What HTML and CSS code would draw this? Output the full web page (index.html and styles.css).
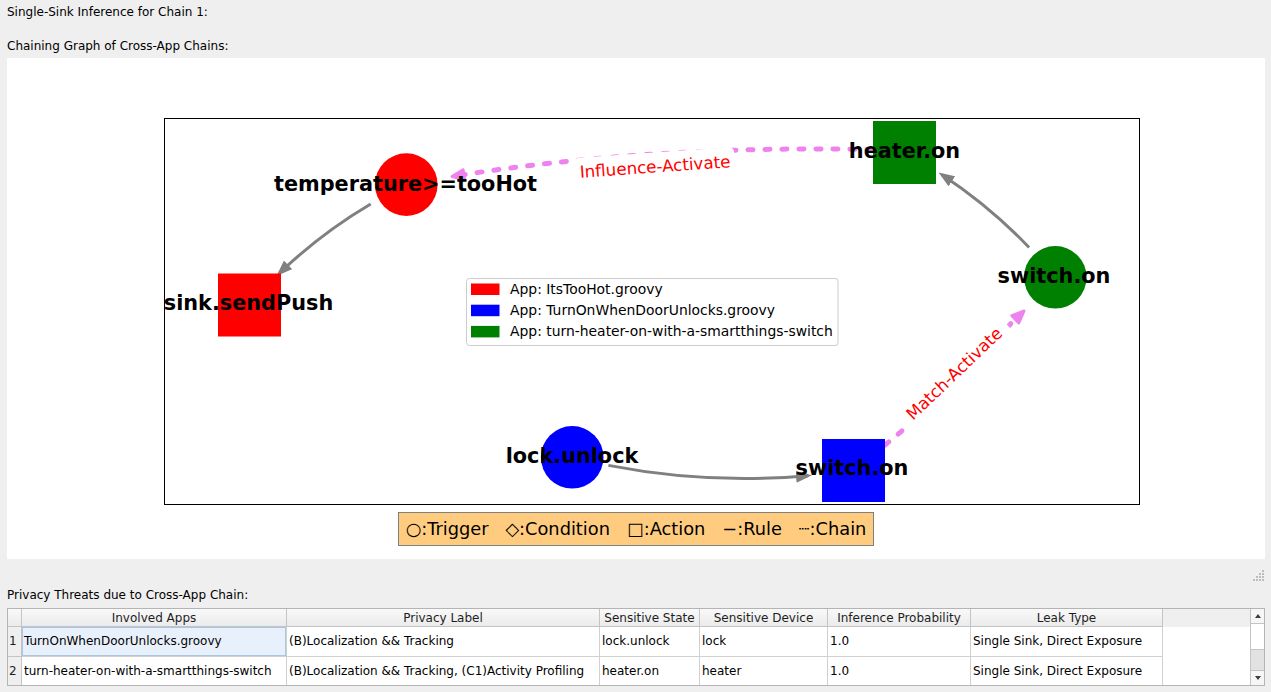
FILE: index.html
```html
<!DOCTYPE html>
<html>
<head>
<meta charset="utf-8">
<title>Single-Sink Inference</title>
<link rel="stylesheet" href="styles.css">
</head>
<body>
<div class="app">
  <div class="caption caption-top">Single-Sink Inference for Chain 1:</div>
  <div class="caption caption-graph">Chaining Graph of Cross-App Chains:</div>
  <div class="panel">
    <svg class="graph" width="1258" height="447" viewBox="7 58 1258 447">
      <defs>
        <marker id="head" markerUnits="userSpaceOnUse" markerWidth="16" markerHeight="12" viewBox="0 0 16 12" refX="12" refY="6" orient="auto">
          <path d="M0,0 L16,6 L0,12 Z" fill="#808080"/>
        </marker>
      </defs>
      <rect class="axes" x="164.5" y="118.5" width="975" height="386"/>
      <g class="rule">
        <path d="M370.7,204 Q321,233.3 279.4,273.2" marker-end="url(#head)"/>
        <path d="M1029.1,247.5 Q989.7,206.1 941.9,174.7" marker-end="url(#head)"/>
        <path d="M608.4,465.4 Q707.5,484.7 808,475.7" marker-end="url(#head)"/>
      </g>
      <g class="chain">
        <path d="M872,149.5 Q650,145 455,176"/>
        <path d="M885,445 Q955,388 1014,320"/>
      </g>
      <polygon class="chain-head" points="452,176.5 464.7,179.5 463.1,169.7"/>
      <polygon class="chain-head" points="1024,311 1018.8,322.9 1011.9,315.7"/>
      <circle cx="406.3" cy="184.6" r="31.3" fill="#ff0000"/>
      <rect x="873" y="121" width="63" height="63" fill="#008000"/>
      <circle cx="1055.3" cy="277.3" r="31.3" fill="#008000"/>
      <rect x="218" y="273.5" width="63" height="63" fill="#ff0000"/>
      <circle cx="572.2" cy="457.3" r="31.3" fill="#0000ff"/>
      <rect x="822" y="439" width="63" height="63" fill="#0000ff"/>
      <g class="node-label">
        <text x="405.5" y="191">temperature&gt;=tooHot</text>
        <text x="904.5" y="158.3">heater.on</text>
        <text x="1054" y="283.3">switch.on</text>
        <text x="248.5" y="310.3">sink.sendPush</text>
        <text x="572" y="462.8">lock.unlock</text>
        <text x="852" y="475.2">switch.on</text>
      </g>
      <g transform="translate(655,166.5) rotate(-4)">
        <rect class="edge-box" x="-80" y="-14" width="160" height="28" rx="5"/>
        <text class="edge-label" x="0" y="6">Influence-Activate</text>
      </g>
      <g transform="translate(954,373.5) rotate(-43.7)">
        <rect class="edge-box" x="-72" y="-14" width="144" height="28" rx="5"/>
        <text class="edge-label" x="0" y="6">Match-Activate</text>
      </g>
      <rect class="legend-box" x="466.5" y="278.5" width="371.5" height="67" rx="3"/>
      <rect x="471" y="283.5" width="28.5" height="11.5" fill="#ff0000"/>
      <rect x="471" y="304.7" width="28.5" height="11.5" fill="#0000ff"/>
      <rect x="471" y="325.9" width="28.5" height="11.5" fill="#008000"/>
      <g class="legend-text">
        <text x="510" y="293.5">App: ItsTooHot.groovy</text>
        <text x="510" y="314.5">App: TurnOnWhenDoorUnlocks.groovy</text>
        <text x="510" y="335.5">App: turn-heater-on-with-a-smartthings-switch</text>
      </g>
    </svg>
    <div class="key">○:Trigger   ◇:Condition   □:Action   −:Rule   ┈:Chain</div>
  </div>
  <div class="grip-row">
    <svg class="grip" width="12" height="12" viewBox="0 0 12 12">
      <rect x="9" y="0" width="2" height="2"/>
      <rect x="6" y="3" width="2" height="2"/><rect x="9" y="3" width="2" height="2"/>
      <rect x="3" y="6" width="2" height="2"/><rect x="6" y="6" width="2" height="2"/><rect x="9" y="6" width="2" height="2"/>
      <rect x="0" y="9" width="2" height="2"/><rect x="3" y="9" width="2" height="2"/><rect x="6" y="9" width="2" height="2"/><rect x="9" y="9" width="2" height="2"/>
    </svg>
  </div>
  <div class="caption caption-threats">Privacy Threats due to Cross-App Chain:</div>
  <div class="table">
    <div class="hcell corner"></div>
    <div class="hcell">Involved Apps</div>
    <div class="hcell">Privacy Label</div>
    <div class="hcell">Sensitive State</div>
    <div class="hcell">Sensitive Device</div>
    <div class="hcell">Inference Probability</div>
    <div class="hcell">Leak Type</div>
    <div class="hfill"></div>
    <div class="scroll">
      <div class="sbtn sbtn-up"><span class="arrow-up"></span></div>
      <div class="sgroove"></div>
      <div class="shandle"></div>
      <div class="sbtn sbtn-down"><span class="arrow-down"></span></div>
    </div>

    <div class="vcell">1</div>
    <div class="cell current">TurnOnWhenDoorUnlocks.groovy</div>
    <div class="cell">(B)Localization &amp;&amp; Tracking</div>
    <div class="cell">lock.unlock</div>
    <div class="cell">lock</div>
    <div class="cell">1.0</div>
    <div class="cell">Single Sink, Direct Exposure</div>
    <div class="dfill"></div>

    <div class="vcell last">2</div>
    <div class="cell last">turn-heater-on-with-a-smartthings-switch</div>
    <div class="cell last">(B)Localization &amp;&amp; Tracking, (C1)Activity Profiling</div>
    <div class="cell last">heater.on</div>
    <div class="cell last">heater</div>
    <div class="cell last">1.0</div>
    <div class="cell last">Single Sink, Direct Exposure</div>
  </div>
</div>
</body>
</html>
```
FILE: styles.css
```css
* { box-sizing: border-box; }

body {
  margin: 0;
  background: #efefef;
  font-family: "DejaVu Sans", sans-serif;
  font-size: 12px;
  color: #000;
}

.app {
  display: flex;
  flex-direction: column;
  padding: 0 6px 0 7px;
}

.caption {
  height: 22px;
  line-height: 22px;
  white-space: nowrap;
}
.caption-top { margin-top: 1px; }
.caption-graph { margin-top: 12px; }

.panel {
  margin-top: 1px;
  height: 501px;
  background: #fff;
  display: flex;
  flex-direction: column;
  align-items: center;
}

.graph {
  display: block;
  flex: none;
  width: 1258px;
  height: 447px;
}

.axes { fill: none; stroke: #000; stroke-width: 1; }

.rule path { fill: none; stroke: #808080; stroke-width: 3; }

.chain path {
  fill: none;
  stroke: #ee82ee;
  stroke-width: 5;
  stroke-linecap: round;
  stroke-dasharray: 5 12;
}
.chain-head {
  fill: #ee82ee;
  stroke: #ee82ee;
  stroke-width: 3;
  stroke-linejoin: round;
}

.node-label text {
  font-family: "DejaVu Sans", sans-serif;
  font-weight: bold;
  font-size: 20.8px;
  fill: #000;
  text-anchor: middle;
}

.edge-box { fill: #fff; }
.edge-label {
  font-family: "DejaVu Sans", sans-serif;
  font-size: 16.7px;
  fill: #ff0000;
  text-anchor: middle;
}

.legend-box {
  fill: #fff;
  fill-opacity: 0.8;
  stroke: #cccccc;
  stroke-width: 1;
}
.legend-text text {
  font-family: "DejaVu Sans", sans-serif;
  font-size: 13.9px;
  fill: #000;
}

.key {
  margin-top: 7px;
  height: 34px;
  line-height: 32px;
  border: 1px solid #808080;
  background: #ffcc7f;
  font-size: 17.8px;
  padding: 0 7px;
  white-space: pre;
}

.grip-row {
  height: 25px;
  display: flex;
  justify-content: flex-end;
  padding-top: 11px;
}
.grip rect { fill: #bdbdbd; }

.table {
  margin-top: 2px;
  height: 78px;
  border: 1px solid #b4b4b4;
  background: #fff;
  display: grid;
  grid-template-columns: 14px 265px 313px 100px 128px 143px 192px 87px 14px;
  grid-template-rows: 18px 30px 28px;
}

.hcell {
  background: linear-gradient(#f9f9f9, #ebebeb);
  border-right: 1px solid #c4c4c4;
  border-bottom: 1px solid #c4c4c4;
  text-align: center;
  line-height: 16px;
  padding-top: 1px;
  color: #1e1e1e;
  white-space: nowrap;
  overflow: hidden;
}

.hfill { background: #efefef; }

.vcell {
  background: #efefef;
  border-right: 1px solid #c4c4c4;
  border-bottom: 1px solid #c4c4c4;
  padding-left: 1px;
  line-height: 29px;
  color: #1e1e1e;
}

.cell {
  border-right: 1px solid #d0d0d0;
  border-bottom: 1px solid #d0d0d0;
  padding-left: 2px;
  line-height: 29px;
  white-space: nowrap;
  overflow: hidden;
}

.vcell.last, .cell.last {
  border-bottom: none;
  line-height: 28px;
}

.cell.current {
  background: #e8f1fb;
  box-shadow: inset 0 0 0 1px #a9c6e2;
}

.dfill {
  grid-column: 8;
  grid-row: 2 / 4;
  background: #fff;
}

.scroll {
  grid-column: 9;
  grid-row: 1 / 4;
  border-left: 1px solid #c4c4c4;
  background: #fff;
  display: flex;
  flex-direction: column;
}

.sbtn {
  height: 15px;
  flex: none;
  background: #f6f6f6;
  display: flex;
  align-items: center;
  justify-content: center;
}
.sbtn-up { border-bottom: 1px solid #c4c4c4; }
.sbtn-down { border-top: 1px solid #c4c4c4; }

.sgroove { height: 25px; flex: none; }

.shandle {
  height: 21px;
  flex: none;
  background: #e2e2e2;
  border-top: 1px solid #c4c4c4;
}

.arrow-up, .arrow-down {
  width: 0;
  height: 0;
  border-left: 3.5px solid transparent;
  border-right: 3.5px solid transparent;
}
.arrow-up { border-bottom: 4px solid #3c3c3c; }
.arrow-down { border-top: 4px solid #3c3c3c; }
```
